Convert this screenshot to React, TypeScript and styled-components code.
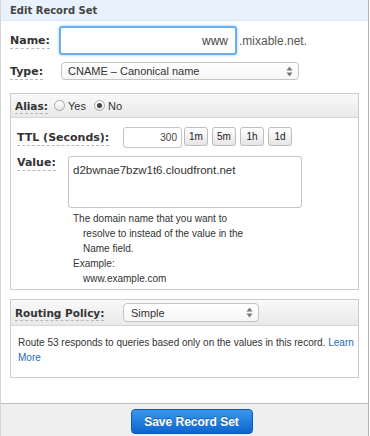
import React from 'react';
import styled, { createGlobalStyle } from 'styled-components';

const GlobalStyle = createGlobalStyle`
  html, body {
    margin: 0;
    padding: 0;
    background: #ffffff;
  }
  body {
    font-family: 'Liberation Sans', Arial, sans-serif;
    color: #333;
  }
`;

const Dialog = styled.div`
  box-sizing: border-box;
  width: 369px;
  height: 436px;
  display: flex;
  flex-direction: column;
  border-left: 1px solid #d6d6d6;
  border-right: 1px solid #b4b4b4;
  background: #fff;
`;

const Header = styled.div`
  height: 20px;
  display: flex;
  align-items: center;
  padding-left: 9px;
  background: #e8f1fc;
  border-bottom: 1px solid #dde7f3;
  font-family: 'DejaVu Sans', Verdana, sans-serif;
  font-weight: bold;
  font-size: 10px;
  color: #444;
`;

const Body = styled.div`
  display: flex;
  flex-direction: column;
  padding: 0 9px;
`;

const Row = styled.div<{ $top: number; $align?: string }>`
  display: flex;
  align-items: ${({ $align }) => $align ?? 'center'};
  margin-top: ${({ $top }) => $top}px;
`;

const Label = styled.div<{ $width: number; $size?: number }>`
  width: ${({ $width }) => $width}px;
  flex-shrink: 0;
  font-family: 'DejaVu Sans', Verdana, sans-serif;
  font-weight: bold;
  font-size: ${({ $size }) => $size ?? 11}px;
  color: #333;
  span {
    border-bottom: 1px dashed #b8b8b8;
    padding-bottom: 1px;
  }
`;

const NameInput = styled.div`
  box-sizing: border-box;
  width: 178px;
  height: 29px;
  border: 2px solid #68aef0;
  border-radius: 3px;
  box-shadow: 0 0 3px rgba(80, 150, 230, 0.6);
  display: flex;
  align-items: center;
  justify-content: flex-end;
  padding-right: 7px;
  font-size: 12px;
  color: #444;
`;

const Suffix = styled.div`
  margin-left: 2px;
  font-size: 12px;
  color: #555;
`;

const SelectBox = styled.div<{ $width: number; $height: number; $pad?: number }>`
  box-sizing: border-box;
  width: ${({ $width }) => $width}px;
  height: ${({ $height }) => $height}px;
  border: 1px solid #c4c4c4;
  border-radius: 4px;
  background: linear-gradient(#ffffff, #f6f6f6);
  display: flex;
  align-items: center;
  justify-content: space-between;
  padding: 0 5px 0 ${({ $pad }) => $pad ?? 6}px;
  font-size: 11px;
  color: #333;
`;

const Arrows = () => (
  <svg width="7" height="11" viewBox="0 0 7 11">
    <path d="M3.5 0.5 L6.5 4.5 H0.5 Z" fill="#777" />
    <path d="M3.5 10.5 L6.5 6.5 H0.5 Z" fill="#777" />
  </svg>
);

const Panel = styled.div<{ $top: number }>`
  margin-top: ${({ $top }) => $top}px;
  border: 1px solid #cccccc;
  display: flex;
  flex-direction: column;
`;

const PanelHeader = styled.div<{ $height: number }>`
  height: ${({ $height }) => $height}px;
  display: flex;
  align-items: center;
  padding-left: 4px;
  background: linear-gradient(#f9f9f9, #e9e9e9);
  border-bottom: 1px solid #d6d6d6;
`;

const RadioGroup = styled.label`
  display: flex;
  align-items: center;
  margin-right: 8px;
  font-size: 11px;
  color: #333;
`;

const Radio = styled.span<{ $checked?: boolean }>`
  box-sizing: border-box;
  width: 11px;
  height: 11px;
  border-radius: 50%;
  border: 1px solid #a8a8a8;
  background: linear-gradient(#ffffff, #e6e6e6);
  margin-right: 3px;
  display: flex;
  align-items: center;
  justify-content: center;
  &::after {
    content: '';
    width: 5px;
    height: 5px;
    border-radius: 50%;
    background: #444;
    display: ${({ $checked }) => ($checked ? 'block' : 'none')};
  }
`;

const PanelBody = styled.div`
  display: flex;
  flex-direction: column;
  padding: 9px 7px 3px 6px;
`;

const TtlInput = styled.div`
  box-sizing: border-box;
  width: 59px;
  height: 21px;
  border: 1px solid #c4c4c4;
  border-radius: 3px;
  display: flex;
  align-items: center;
  justify-content: flex-end;
  padding-right: 4px;
  font-size: 10px;
  color: #444;
  margin-right: 2px;
`;

const TtlButton = styled.button`
  box-sizing: border-box;
  height: 19px;
  width: 24px;
  margin-right: 4px;
  margin-top: -2px;
  padding: 0;
  border: 1px solid #bdbdbd;
  border-radius: 3px;
  background: linear-gradient(#ffffff, #e6e6e6);
  font-family: 'Liberation Sans', Arial, sans-serif;
  font-size: 10px;
  color: #222;
`;

const ValueArea = styled.div`
  box-sizing: border-box;
  width: 234px;
  height: 52px;
  border: 1px solid #c4c4c4;
  border-radius: 3px;
  padding: 7px 4px;
  font-size: 11.5px;
  color: #333;
`;

const Help = styled.div`
  margin: 3px 0 0 56px;
  width: 180px;
  font-size: 10px;
  line-height: 15px;
  color: #333;
  p {
    margin: 0;
    padding-left: 10px;
    text-indent: -10px;
  }
`;

const PolicyText = styled.div`
  padding: 9px 2px 12px 7px;
  font-size: 10px;
  line-height: 15px;
  color: #333;
  a {
    color: #1d69b6;
    text-decoration: none;
  }
`;

const Footer = styled.div`
  margin-top: auto;
  height: 33px;
  border-top: 1px solid #bcbcbc;
  background: #efefef;
  display: flex;
  justify-content: center;
  padding: 5px 0 0 14px;
  box-sizing: border-box;
`;

const SaveButton = styled.button`
  box-sizing: border-box;
  width: 122px;
  height: 25px;
  border: 1px solid #0b5cb5;
  border-radius: 4px;
  background: linear-gradient(#3a97ec, #0c66cf);
  color: #fff;
  font-family: 'Liberation Sans', Arial, sans-serif;
  font-weight: bold;
  font-size: 12px;
  text-shadow: 0 -1px 0 rgba(0, 0, 0, 0.3);
`;

export default function App() {
  return (
    <>
      <GlobalStyle />
      <Dialog>
        <Header>Edit Record Set</Header>
        <Body>
          <Row $top={5}>
            <Label $width={49}>
              <span>Name:</span>
            </Label>
            <NameInput>www</NameInput>
            <Suffix>.mixable.net.</Suffix>
          </Row>
          <Row $top={7}>
            <Label $width={51}>
              <span>Type:</span>
            </Label>
            <SelectBox $width={238} $height={18}>
              CNAME – Canonical name
              <Arrows />
            </SelectBox>
          </Row>

          <Panel $top={13}>
            <PanelHeader $height={23}>
              <Label $width={39} $size={10.5}>
                <span>Alias:</span>
              </Label>
              <RadioGroup>
                <Radio />
                Yes
              </RadioGroup>
              <RadioGroup>
                <Radio $checked />
                No
              </RadioGroup>
            </PanelHeader>
            <PanelBody>
              <Row $top={0}>
                <Label $width={106}>
                  <span>TTL (Seconds):</span>
                </Label>
                <TtlInput>300</TtlInput>
                {['1m', '5m', '1h', '1d'].map((t) => (
                  <TtlButton key={t}>{t}</TtlButton>
                ))}
              </Row>
              <Row $top={8} $align="flex-start">
                <Label $width={51}>
                  <span>Value:</span>
                </Label>
                <ValueArea>d2bwnae7bzw1t6.cloudfront.net</ValueArea>
              </Row>
              <Help>
                <p>The domain name that you want to resolve to instead of the value in the Name field.</p>
                <p>
                  Example:
                  <br />
                  www.example.com
                </p>
              </Help>
            </PanelBody>
          </Panel>

          <Panel $top={9}>
            <PanelHeader $height={25}>
              <Label $width={108} $size={10.5}>
                <span>Routing Policy:</span>
              </Label>
              <SelectBox $width={136} $height={19} $pad={7}>
                Simple
                <Arrows />
              </SelectBox>
            </PanelHeader>
            <PolicyText>
              Route 53 responds to queries based only on the values in this record. <a href="#">Learn More</a>
            </PolicyText>
          </Panel>
        </Body>
        <Footer>
          <SaveButton>Save Record Set</SaveButton>
        </Footer>
      </Dialog>
    </>
  );
}
